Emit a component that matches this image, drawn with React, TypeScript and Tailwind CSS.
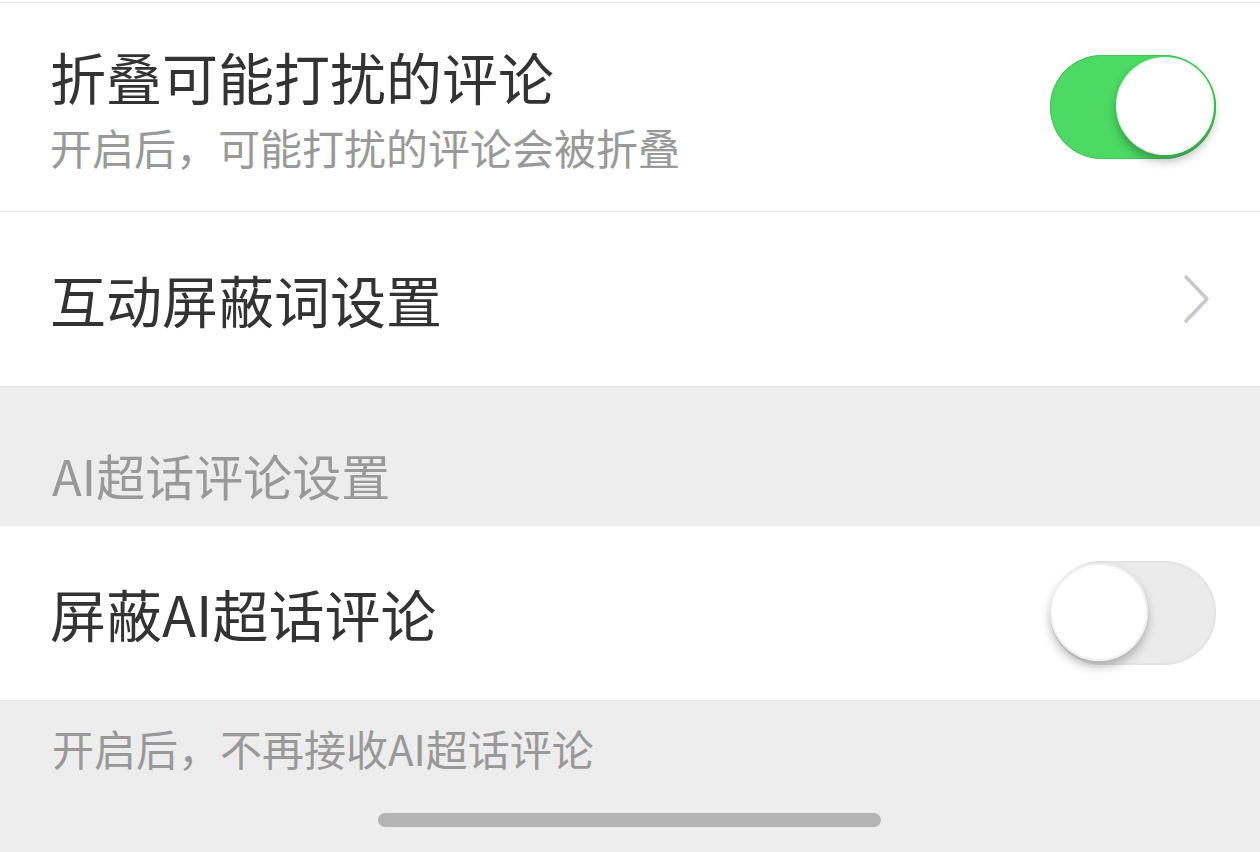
const FONT = "font-['Noto_Sans_CJK_SC','Noto_Sans',sans-serif]";

function Toggle({ on }: { on: boolean }) {
  return (
    <div
      className={
        on
          ? "relative h-[104px] w-[166px] rounded-full bg-[#4cd964] shadow-[inset_0_0_0_1px_#45c45b]"
          : "relative h-[104px] w-[166px] rounded-full bg-[#ebebeb] shadow-[inset_0_0_0_2px_#e4e4e4]"
      }>
      <div
        className={
          on
            ? "absolute right-[2px] top-[2px] h-[98px] w-[98px] rounded-full border-2 border-[#eef9ef] bg-white shadow-[0_6px_10px_rgba(0,0,0,0.28)]"
            : "absolute left-0 top-[2px] h-[98px] w-[98px] rounded-full border-2 border-[#f0f0f0] bg-white shadow-[0_6px_10px_rgba(0,0,0,0.25)]"
        }
      />
    </div>
  );
}

export default function App() {
  return (
    <div className={`${FONT} flex h-[852px] w-[1260px] flex-col overflow-hidden bg-[#ededed]`}>
      <div className="h-[2px] bg-white" />

      {/* fold comments */}
      <div className="flex h-[210px] items-center justify-between border-y border-[#e6e6e6] bg-white pl-[50px] pr-[44px]">
        <div className="flex flex-col gap-[22px] pt-[2px]">
          <div className="text-[56px] leading-[56px] text-[#333333]">折叠可能打扰的评论</div>
          <div className="text-[42px] leading-[42px] text-[#999999]">开启后，可能打扰的评论会被折叠</div>
        </div>
        <Toggle on />
      </div>

      {/* blocked words */}
      <div className="flex h-[175px] items-center justify-between border-b border-[#e0e0e0] bg-white pl-[50px] pr-[48px]">
        <div className="text-[56px] leading-[56px] text-[#333333]">互动屏蔽词设置</div>
        <svg width="30" height="50" viewBox="0 0 30 50" fill="none">
          <path d="M4 3 L25 25 L4 47" stroke="#c8c8cc" strokeWidth="3.5" strokeLinecap="round" strokeLinejoin="round" />
        </svg>
      </div>

      <div className="flex h-[139px] items-end pb-[27px] pl-[52px] text-[49px] leading-[49px] text-[#999999]">
        AI超话评论设置
      </div>

      {/* block AI comments */}
      <div className="flex h-[175px] items-center justify-between border-b border-[#e6e6e6] bg-white pl-[50px] pr-[44px]">
        <div className="text-[56px] leading-[56px] text-[#333333]">屏蔽AI超话评论</div>
        <Toggle on={false} />
      </div>

      <div className="pl-[52px] pt-[26px] text-[42px] leading-[42px] text-[#999999]">开启后，不再接收AI超话评论</div>

      <div className="mt-auto mb-[25px] flex justify-center">
        <div className="ml-[-1px] h-[14px] w-[503px] rounded-full bg-[#b4b4b4]" />
      </div>
    </div>
  );
}
